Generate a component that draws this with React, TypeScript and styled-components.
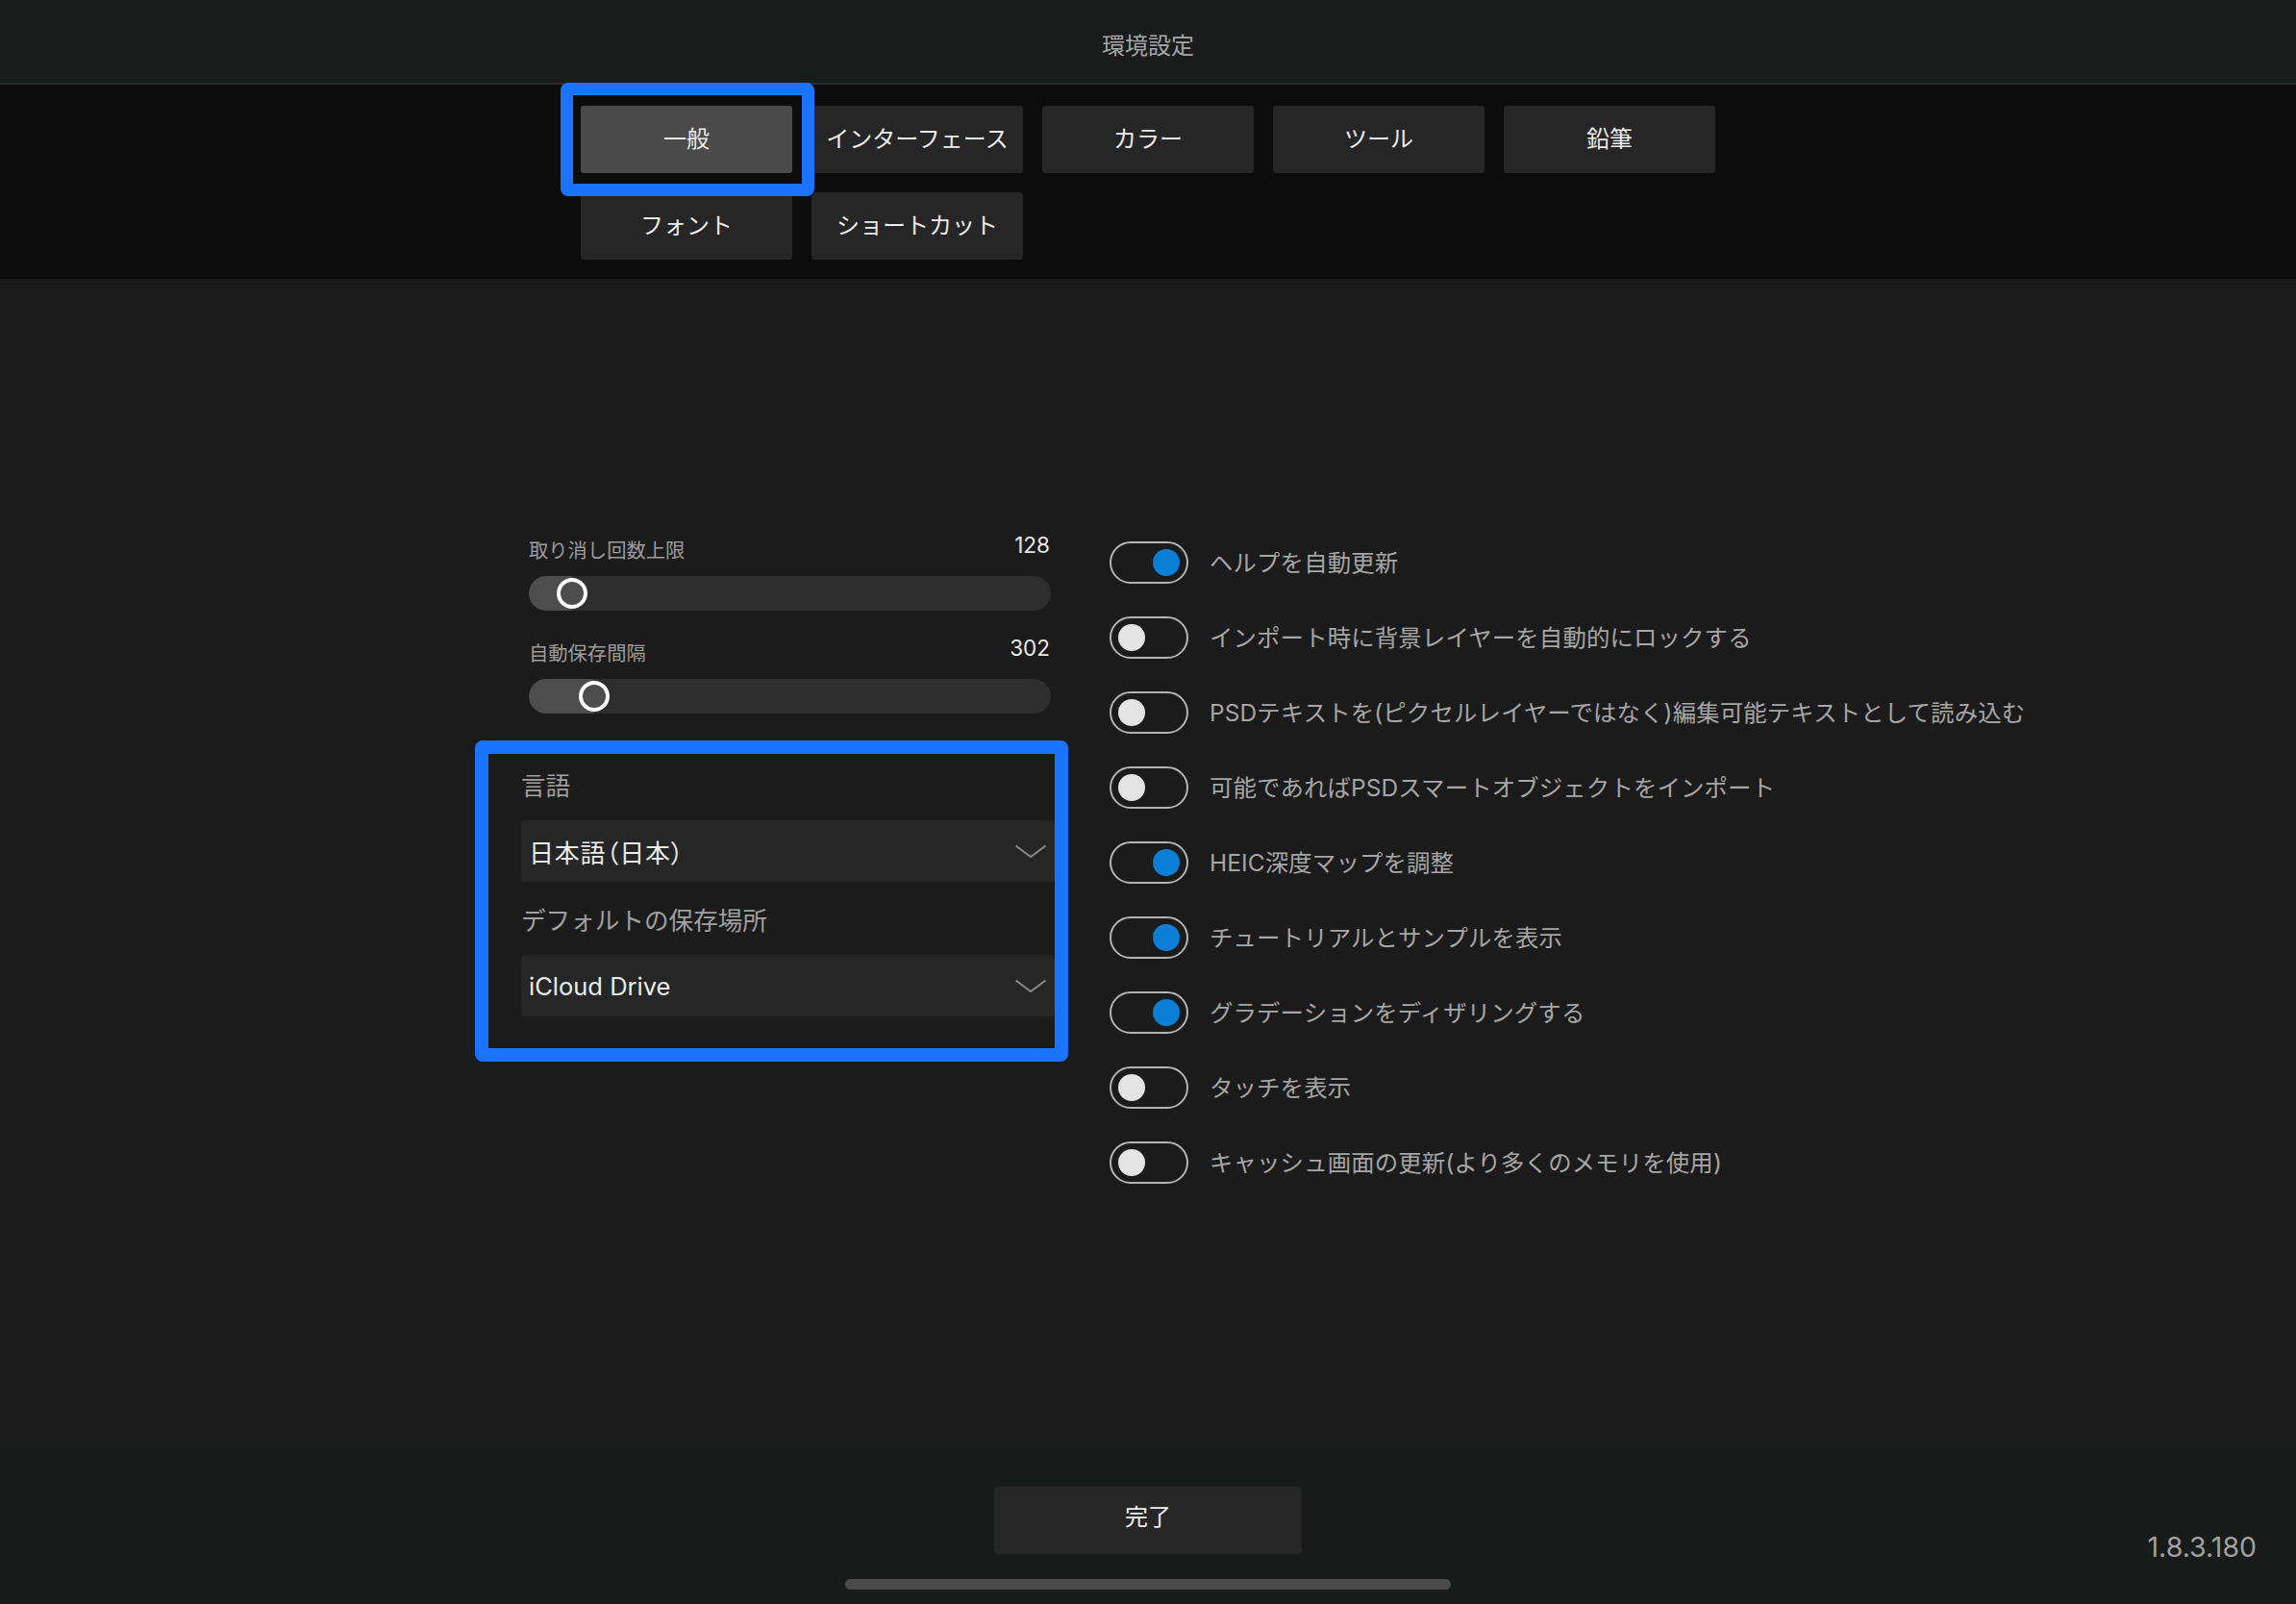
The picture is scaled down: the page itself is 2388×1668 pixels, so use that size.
import React from "react";
import styled, { createGlobalStyle } from "styled-components";

const GlobalStyle = createGlobalStyle`
  html, body {
    margin: 0;
    padding: 0;
    background: #1b1b1b;
  }
  body {
    font-family: Inter, "Noto Sans CJK JP", sans-serif;
    -webkit-font-smoothing: antialiased;
  }
  * {
    box-sizing: border-box;
  }
`;

const Page = styled.div`
  display: flex;
  flex-direction: column;
  width: 2388px;
  height: 1668px;
  overflow: hidden;
  background: #1b1b1b;
`;

const Header = styled.header`
  display: flex;
  align-items: center;
  justify-content: center;
  height: 88px;
  padding-top: 9px;
  background: #1a1b1b;
  border-bottom: 2px solid #2c2c2c;
`;

const Title = styled.h1`
  margin: 0;
  font-size: 24px;
  font-weight: 400;
  line-height: 1;
  color: #a6a6a6;
`;

const TabBar = styled.nav`
  display: flex;
  justify-content: center;
  height: 202px;
  padding-top: 22px;
  background: #0c0c0c;
`;

const TabGrid = styled.div`
  display: grid;
  grid-template-columns: repeat(5, 220px);
  grid-auto-rows: 70px;
  column-gap: 20px;
  row-gap: 20px;
  align-content: start;
`;

const Tab = styled.button<{ $active?: boolean }>`
  position: relative;
  z-index: ${(p) => (p.$active ? 1 : 0)};
  display: flex;
  align-items: center;
  justify-content: center;
  border: none;
  border-radius: 3px;
  background: ${(p) => (p.$active ? "#4a4a4a" : "#262626")};
  color: #ececec;
  font-family: inherit;
  font-size: 24px;
  line-height: 1;
  padding: 0;

  &::after {
    content: "";
    display: ${(p) => (p.$active ? "block" : "none")};
    position: absolute;
    top: -24px;
    bottom: -24px;
    left: -21px;
    right: -23px;
    border: 13px solid #1b74ff;
    border-radius: 8px;
    pointer-events: none;
  }
`;

const Main = styled.main`
  flex: 1;
  display: flex;
  align-items: flex-start;
  padding-top: 269px;
  padding-left: 494px;
  gap: 43px;
`;

const LeftColumn = styled.div`
  display: flex;
  flex-direction: column;
  width: 617px;
`;

const SliderBlock = styled.div`
  display: flex;
  flex-direction: column;
  gap: 12px;
  margin: 0 18px 0 56px;

  & + & {
    margin-top: 31px;
  }
`;

const SliderHead = styled.div`
  display: flex;
  align-items: flex-end;
  justify-content: space-between;
  height: 28px;
`;

const SliderLabel = styled.span`
  font-size: 20.3px;
  line-height: 28px;
  color: #9c9c9c;
`;

const SliderValue = styled.span`
  font-size: 22.5px;
  line-height: 28px;
  color: #e8e8e8;
  margin-bottom: 6px;
  margin-right: 1px;
`;

const Track = styled.div`
  position: relative;
  height: 36px;
  border-radius: 18px;
  background: #2e2e2e;
  overflow: hidden;
`;

const Fill = styled.div`
  height: 100%;
  border-radius: 18px 0 0 18px;
  background: #4d4d4d;
  display: flex;
  justify-content: flex-end;
  align-items: center;
`;

const Thumb = styled.span`
  flex: none;
  width: 32px;
  height: 32px;
  margin-right: -16px;
  border-radius: 50%;
  border: 4px solid #ffffff;
  background: #4d4d4d;
`;

const Section = styled.div`
  position: relative;
  margin-top: 28px;
  padding: 31px 14px 47px 48px;
  display: flex;
  flex-direction: column;

  &::after {
    content: "";
    position: absolute;
    inset: 0;
    border: 14px solid #1b74ff;
    border-radius: 8px;
    pointer-events: none;
  }
`;

const FieldLabel = styled.div<{ $gap?: number }>`
  font-size: 25.6px;
  line-height: 34px;
  color: #a0a0a0;
  margin-top: ${(p) => p.$gap ?? 0}px;
`;

const Select = styled.div`
  display: flex;
  align-items: center;
  justify-content: space-between;
  height: 64px;
  margin-top: 18px;
  padding: 0 8px 0 8px;
  border-radius: 4px;
  background: #262626;
`;

const SelectValue = styled.span<{ $cjk?: boolean }>`
  font-size: ${(p) => (p.$cjk ? 26 : 25.5)}px;
  color: #ececec;
  font-feature-settings: "palt";
  letter-spacing: ${(p) => (p.$cjk ? 0.8 : 0)}px;
`;

const Chevron = () => (
  <svg width="34" height="15" viewBox="0 0 34 15" fill="none">
    <polyline points="1.5,1.5 17,13 32.5,1.5" stroke="#8a8a8a" strokeWidth="2" />
  </svg>
);

const RightColumn = styled.ul`
  list-style: none;
  margin: 4px 0 0;
  padding: 0;
  display: flex;
  flex-direction: column;
  gap: 34px;
`;

const ToggleRow = styled.li`
  display: flex;
  align-items: center;
  gap: 22px;
  height: 44px;
`;

const Switch = styled.span<{ $on: boolean }>`
  flex: none;
  display: flex;
  align-items: center;
  justify-content: ${(p) => (p.$on ? "flex-end" : "flex-start")};
  width: 82px;
  height: 44px;
  padding: 0 7px;
  border: 2px solid #b4b4b4;
  border-radius: 22px;
`;

const Knob = styled.span<{ $on: boolean }>`
  width: 28px;
  height: 28px;
  border-radius: 50%;
  background: ${(p) => (p.$on ? "#0a7fd5" : "#e4e4e4")};
`;

const ToggleLabel = styled.span`
  font-size: 24.4px;
  line-height: 1;
  color: #a6a6a6;
  white-space: nowrap;
  letter-spacing: 0.15px;
`;

const Footer = styled.footer`
  display: grid;
  grid-template-columns: 1fr 320px 1fr;
  grid-template-rows: 70px auto;
  row-gap: 26px;
  height: 168px;
  padding-top: 46px;
  background: #191a1a;
`;

const DoneButton = styled.button`
  grid-column: 2;
  grid-row: 1;
  border: none;
  border-radius: 4px;
  background: #262626;
  color: #ececec;
  font-family: inherit;
  font-size: 24px;
  line-height: 1;
  padding: 0 0 6px;
`;

const Version = styled.span`
  grid-column: 3;
  grid-row: 1 / span 2;
  justify-self: end;
  align-self: start;
  margin: 46px 41px 0 0;
  font-size: 28.5px;
  line-height: 34px;
  color: #a0a0a0;
`;

const HomeIndicator = styled.div`
  grid-column: 1 / span 3;
  grid-row: 2;
  justify-self: center;
  width: 630px;
  height: 11px;
  border-radius: 6px;
  background: #4a4a4a;
`;

const tabs = [
  "一般",
  "インターフェース",
  "カラー",
  "ツール",
  "鉛筆",
  "フォント",
  "ショートカット",
];

const sliders = [
  { label: "取り消し回数上限", value: 128, pos: 0.057 },
  { label: "自動保存間隔", value: 302, pos: 0.102 },
];

const toggles = [
  { label: "ヘルプを自動更新", on: true },
  { label: "インポート時に背景レイヤーを自動的にロックする", on: false },
  { label: "PSDテキストを(ピクセルレイヤーではなく)編集可能テキストとして読み込む", on: false },
  { label: "可能であればPSDスマートオブジェクトをインポート", on: false },
  { label: "HEIC深度マップを調整", on: true },
  { label: "チュートリアルとサンプルを表示", on: true },
  { label: "グラデーションをディザリングする", on: true },
  { label: "タッチを表示", on: false },
  { label: "キャッシュ画面の更新(より多くのメモリを使用)", on: false },
];

export default function App() {
  return (
    <Page>
      <GlobalStyle />
      <Header>
        <Title>環境設定</Title>
      </Header>
      <TabBar>
        <TabGrid>
          {tabs.map((t, i) => (
            <Tab key={t} $active={i === 0}>
              {t}
            </Tab>
          ))}
        </TabGrid>
      </TabBar>
      <Main>
        <LeftColumn>
          {sliders.map((s) => (
            <SliderBlock key={s.label}>
              <SliderHead>
                <SliderLabel>{s.label}</SliderLabel>
                <SliderValue>{s.value}</SliderValue>
              </SliderHead>
              <Track>
                {/* thumb travels between 16px and width-16px */}
                <Fill style={{ width: `calc(16px + (100% - 32px) * ${s.pos})` }}>
                  <Thumb />
                </Fill>
              </Track>
            </SliderBlock>
          ))}
          <Section>
            <FieldLabel>言語</FieldLabel>
            <Select>
              <SelectValue $cjk>日本語（日本）</SelectValue>
              <Chevron />
            </Select>
            <FieldLabel $gap={24}>デフォルトの保存場所</FieldLabel>
            <Select>
              <SelectValue>iCloud Drive</SelectValue>
              <Chevron />
            </Select>
          </Section>
        </LeftColumn>
        <RightColumn>
          {toggles.map((t) => (
            <ToggleRow key={t.label}>
              <Switch $on={t.on}>
                <Knob $on={t.on} />
              </Switch>
              <ToggleLabel>{t.label}</ToggleLabel>
            </ToggleRow>
          ))}
        </RightColumn>
      </Main>
      <Footer>
        <DoneButton>完了</DoneButton>
        <Version>1.8.3.180</Version>
        <HomeIndicator />
      </Footer>
    </Page>
  );
}
